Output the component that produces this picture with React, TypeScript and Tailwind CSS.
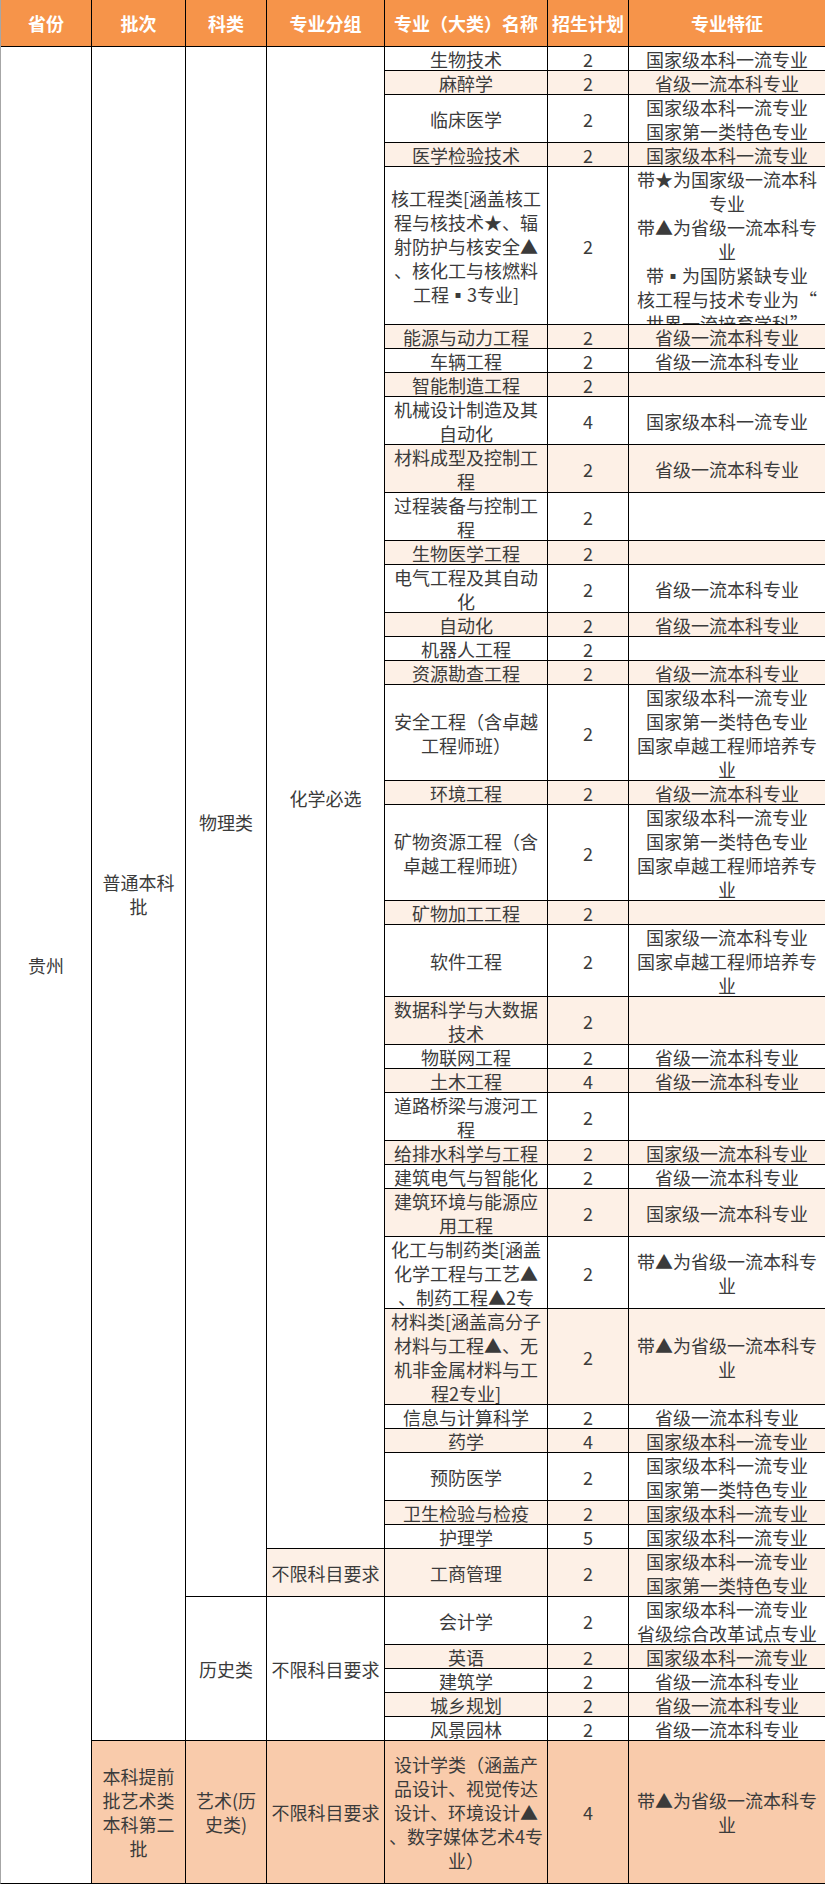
import clsx from "clsx";

type Bg = "w" | "p" | "d";

interface Major {
  name: string[];
  plan: string;
  feat: string[];
  h: number;
  bg: Bg;
  nameTop?: boolean;
  featTop?: boolean;
}

const heights: Record<number, string> = {
  23: "h-[23px]",
  47: "h-[47px]",
  71: "h-[71px]",
  95: "h-[95px]",
  142: "h-[142px]",
  157: "h-[157px]",
};

const bgs: Record<Bg, string> = { w: "bg-white", p: "bg-[#fdf0e6]", d: "bg-[#f9cbab]" };

const A = "国家级本科一流专业";
const B = "省级一流本科专业";
const C = "国家第一类特色专业";
const D = "国家级一流本科专业";
const E = ["国家卓越工程师培养专", "业"];
const T = ["带▲为省级一流本科专", "业"];

const majors: Major[] = [
  { name: ["生物技术"], plan: "2", feat: [A], h: 23, bg: "w" },
  { name: ["麻醉学"], plan: "2", feat: [B], h: 23, bg: "p" },
  { name: ["临床医学"], plan: "2", feat: [A, C], h: 47, bg: "w" },
  { name: ["医学检验技术"], plan: "2", feat: [A], h: 23, bg: "p" },
  {
    name: ["核工程类[涵盖核工", "程与核技术★、辐", "射防护与核安全▲", "、核化工与核燃料", "工程▪3专业]"],
    plan: "2",
    feat: ["带★为国家级一流本科", "专业", "带▲为省级一流本科专", "业", "带▪为国防紧缺专业", "核工程与技术专业为“", "世界一流培育学科”"],
    h: 157,
    bg: "w",
    featTop: true,
  },
  { name: ["能源与动力工程"], plan: "2", feat: [B], h: 23, bg: "p" },
  { name: ["车辆工程"], plan: "2", feat: [B], h: 23, bg: "w" },
  { name: ["智能制造工程"], plan: "2", feat: [], h: 23, bg: "p" },
  { name: ["机械设计制造及其", "自动化"], plan: "4", feat: [A], h: 47, bg: "w" },
  { name: ["材料成型及控制工", "程"], plan: "2", feat: [B], h: 47, bg: "p" },
  { name: ["过程装备与控制工", "程"], plan: "2", feat: [], h: 47, bg: "w" },
  { name: ["生物医学工程"], plan: "2", feat: [], h: 23, bg: "p" },
  { name: ["电气工程及其自动", "化"], plan: "2", feat: [B], h: 47, bg: "w" },
  { name: ["自动化"], plan: "2", feat: [B], h: 23, bg: "p" },
  { name: ["机器人工程"], plan: "2", feat: [], h: 23, bg: "w" },
  { name: ["资源勘查工程"], plan: "2", feat: [B], h: 23, bg: "p" },
  { name: ["安全工程（含卓越", "工程师班）"], plan: "2", feat: [A, C, ...E], h: 95, bg: "w" },
  { name: ["环境工程"], plan: "2", feat: [B], h: 23, bg: "p" },
  { name: ["矿物资源工程（含", "卓越工程师班）"], plan: "2", feat: [A, C, ...E], h: 95, bg: "w" },
  { name: ["矿物加工工程"], plan: "2", feat: [], h: 23, bg: "p" },
  { name: ["软件工程"], plan: "2", feat: [D, ...E], h: 71, bg: "w" },
  { name: ["数据科学与大数据", "技术"], plan: "2", feat: [], h: 47, bg: "p" },
  { name: ["物联网工程"], plan: "2", feat: [B], h: 23, bg: "w" },
  { name: ["土木工程"], plan: "4", feat: [B], h: 23, bg: "p" },
  { name: ["道路桥梁与渡河工", "程"], plan: "2", feat: [], h: 47, bg: "w" },
  { name: ["给排水科学与工程"], plan: "2", feat: [D], h: 23, bg: "p" },
  { name: ["建筑电气与智能化"], plan: "2", feat: [B], h: 23, bg: "w" },
  { name: ["建筑环境与能源应", "用工程"], plan: "2", feat: [D], h: 47, bg: "p" },
  {
    name: ["化工与制药类[涵盖", "化学工程与工艺▲", "、制药工程▲2专", "业]"],
    plan: "2",
    feat: T,
    h: 71,
    bg: "w",
    nameTop: true,
  },
  { name: ["材料类[涵盖高分子", "材料与工程▲、无", "机非金属材料与工", "程2专业]"], plan: "2", feat: T, h: 95, bg: "p" },
  { name: ["信息与计算科学"], plan: "2", feat: [B], h: 23, bg: "w" },
  { name: ["药学"], plan: "4", feat: [A], h: 23, bg: "p" },
  { name: ["预防医学"], plan: "2", feat: [A, C], h: 47, bg: "w" },
  { name: ["卫生检验与检疫"], plan: "2", feat: [A], h: 23, bg: "p" },
  { name: ["护理学"], plan: "5", feat: [A], h: 23, bg: "w" },
  { name: ["工商管理"], plan: "2", feat: [A, C], h: 47, bg: "p" },
  { name: ["会计学"], plan: "2", feat: [A, "省级综合改革试点专业"], h: 47, bg: "w" },
  { name: ["英语"], plan: "2", feat: [A], h: 23, bg: "p" },
  { name: ["建筑学"], plan: "2", feat: [B], h: 23, bg: "w" },
  { name: ["城乡规划"], plan: "2", feat: [B], h: 23, bg: "p" },
  { name: ["风景园林"], plan: "2", feat: [B], h: 23, bg: "w" },
  {
    name: ["设计学类（涵盖产", "品设计、视觉传达", "设计、环境设计▲", "、数字媒体艺术4专", "业）"],
    plan: "4",
    feat: T,
    h: 142,
    bg: "d",
  },
];

const headers = ["省份", "批次", "科类", "专业分组", "专业（大类）名称", "招生计划", "专业特征"];

function Cell({ lines, h, bg, top }: { lines: string[]; h: number; bg: Bg; top?: boolean }) {
  return (
    <div className={clsx("flex flex-col overflow-hidden text-center", heights[h], bgs[bg], top ? "justify-start" : "justify-center")}>
      {lines.map((line, i) => (
        <div key={i} className="shrink-0 whitespace-nowrap">
          {line}
        </div>
      ))}
    </div>
  );
}

function Span({ lines, span, bg }: { lines: string[]; span: string; bg: Bg }) {
  return (
    <div className={clsx("flex flex-col items-center justify-center text-center", span, bgs[bg])}>
      {lines.map((line, i) => (
        <div key={i} className="whitespace-nowrap">
          {line}
        </div>
      ))}
    </div>
  );
}

function MajorCells({ m }: { m: Major }) {
  return (
    <>
      <Cell lines={m.name} h={m.h} bg={m.bg} top={m.nameTop} />
      <Cell lines={[m.plan]} h={m.h} bg={m.bg} />
      <Cell lines={m.feat} h={m.h} bg={m.bg} top={m.featTop} />
    </>
  );
}

export default function App() {
  return (
    <div className="w-[825px] bg-white font-['Noto_Sans_CJK_SC','Noto_Sans',sans-serif] text-[18px] leading-[24px] text-[#3b3b3b]">
      <div className="grid grid-cols-[90px_93px_80px_117px_162px_80px_196px] gap-px border-b border-l border-black border-l-[#a6a6a6] bg-black">
        {headers.map((h) => (
          <div key={h} className="flex h-[46px] items-center justify-center whitespace-nowrap bg-[#f6944a] font-bold text-white">
            {h}
          </div>
        ))}

        <Span lines={["贵州"]} span="row-span-[42]" bg="w" />
        <Span lines={["普通本科", "批"]} span="row-span-[41]" bg="w" />
        <Span lines={["物理类"]} span="row-span-[36]" bg="w" />
        <Span lines={["化学必选"]} span="row-span-[35]" bg="w" />
        {majors.slice(0, 35).map((m) => (
          <MajorCells key={m.name[0]} m={m} />
        ))}

        <Span lines={["不限科目要求"]} span="row-span-1" bg="p" />
        <MajorCells m={majors[35]} />

        <Span lines={["历史类"]} span="row-span-5" bg="w" />
        <Span lines={["不限科目要求"]} span="row-span-5" bg="w" />
        {majors.slice(36, 41).map((m) => (
          <MajorCells key={m.name[0]} m={m} />
        ))}

        <Span lines={["本科提前", "批艺术类", "本科第二", "批"]} span="row-span-1" bg="d" />
        <Span lines={["艺术(历", "史类)"]} span="row-span-1" bg="d" />
        <Span lines={["不限科目要求"]} span="row-span-1" bg="d" />
        <MajorCells m={majors[41]} />
      </div>
    </div>
  );
}
